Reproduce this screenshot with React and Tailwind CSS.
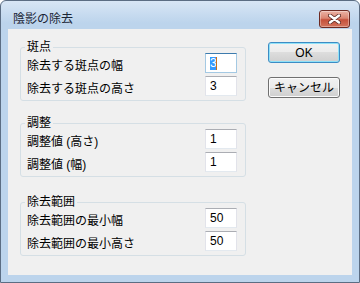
import React from "react";

const groups = [
  {
    title: "斑点",
    rows: [
      { label: "除去する斑点の幅", value: "3", focused: true },
      { label: "除去する斑点の高さ", value: "3" },
    ],
  },
  {
    title: "調整",
    rows: [
      { label: "調整値 (高さ)", value: "1" },
      { label: "調整値 (幅)", value: "1" },
    ],
  },
  {
    title: "除去範囲",
    rows: [
      { label: "除去範囲の最小幅", value: "50" },
      { label: "除去範囲の最小高さ", value: "50" },
    ],
  },
];

function CloseButton() {
  return (
    <button className="w-[31px] h-[18px] mr-[2px] rounded-[3px] border border-[#6d2a22] bg-[linear-gradient(#ebb3a5,#db8672_45%,#c5503b_55%,#d3745d)] shadow-[inset_0_0_0_1px_rgba(255,255,255,0.35)] flex items-center justify-center">
      <svg width="13" height="10" viewBox="0 0 13 10">
        <path d="M2 1.5 L11 8.5 M11 1.5 L2 8.5" stroke="#5a2a24" strokeWidth="4" strokeLinecap="round" />
        <path d="M2 1.5 L11 8.5 M11 1.5 L2 8.5" stroke="#ffffff" strokeWidth="2.4" strokeLinecap="round" />
      </svg>
    </button>
  );
}

function TextBox({ value, focused }) {
  const border = focused
    ? "border-[#a4c9e3] border-t-[#3d7bad]"
    : "border-[#e2e3ea] border-t-[#abadb3] border-b-[#e3e9ef]";
  return (
    <div className={`w-[32px] h-[20px] bg-white border ${border} pl-[4px] leading-[18px]`}>
      {focused ? (
        <span className="relative inline-block align-middle w-[7px] h-[13px] leading-[13px] bg-[#3399ff] text-white">
          {value}
          <span className="absolute right-0 top-0 w-px h-full bg-[#c8701c]" />
        </span>
      ) : (
        value
      )}
    </div>
  );
}

function Group({ title, rows, className = "" }) {
  return (
    <fieldset className={`border border-[#d5dfe5] rounded-[3px] pl-[4px] pr-[8px] pb-[4px] min-w-0 ${className}`}>
      <legend className="px-[2px] leading-[11px]">{title}</legend>
      <div className="flex flex-col gap-[3px]">
        {rows.map((row) => (
          <div key={row.label} className="h-[20px] pl-[2px] flex justify-between">
            <span className="mt-[6px] leading-[14px] whitespace-nowrap">{row.label}</span>
            <TextBox value={row.value} focused={row.focused} />
          </div>
        ))}
      </div>
    </fieldset>
  );
}

function DialogButton({ children, isDefault }) {
  const border = isDefault
    ? "border-[#3c8cc4] shadow-[inset_0_0_0_1px_#8fe1f8]"
    : "border-[#707070] shadow-[inset_0_0_0_1px_#fbfbfb]";
  return (
    <button
      className={`w-[72px] h-[21px] rounded-[3px] border ${border} bg-[linear-gradient(#f2f2f2,#ebebeb_50%,#dddddd_50%,#cfcfcf)] flex items-center justify-center leading-[14px] text-black`}
    >
      {children}
    </button>
  );
}

export default function App() {
  return (
    <div className="w-[360px] h-[283px] flex flex-col rounded-t-[6px] border border-[#5b6d83] bg-[linear-gradient(#d8e6f5,#bcd4ec_22px)] px-[7px] pb-[7px] text-[12px] text-black [font-family:'Liberation_Sans','Noto_Sans_CJK_JP',sans-serif]">
      {/* Title bar */}
      <div className="h-[28px] pt-[7px] flex items-center justify-between">
        <span className="pl-[5px] leading-[14px] text-[#1a2535]">陰影の除去</span>
        <CloseButton />
      </div>

      {/* Dialog body */}
      <div className="flex-1 bg-[#f0f0f0] flex pt-[13px] pl-[12px]">
        <div className="w-[226px] flex flex-col">
          <Group {...groups[0]} />
          <Group {...groups[1]} className="mt-[17px]" />
          <Group {...groups[2]} className="mt-[20px]" />
        </div>
        <div className="ml-[22px] flex flex-col gap-[14px]">
          <DialogButton isDefault>OK</DialogButton>
          <DialogButton>キャンセル</DialogButton>
        </div>
      </div>
    </div>
  );
}
